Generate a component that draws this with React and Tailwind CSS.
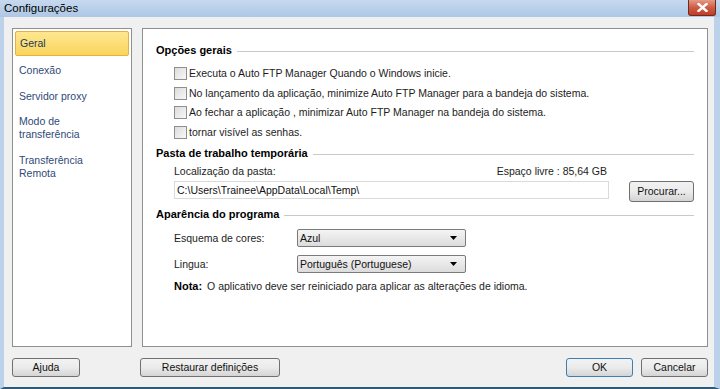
import React, { useState } from 'react';

const navItems = [
  { id: 'geral', label: ['Geral'] },
  { id: 'conexao', label: ['Conexão'] },
  { id: 'proxy', label: ['Servidor proxy'] },
  { id: 'modo', label: ['Modo de', 'transferência'] },
  { id: 'remota', label: ['Transferência', 'Remota'] },
];

const options = [
  'Executa o Auto FTP Manager Quando o Windows inicie.',
  'No lançamento da aplicação, minimize Auto FTP Manager para a bandeja do sistema.',
  'Ao fechar a aplicação , minimizar Auto FTP Manager na bandeja do sistema.',
  'tornar visível as senhas.',
];

function SectionHeading({ children }) {
  return (
    <div className="flex items-center h-[14px]">
      <span className="font-bold text-[11px] text-black">{children}</span>
      <div className="flex-1 h-px bg-[#c9c9c9] ml-[5px] mt-[2px]" />
    </div>
  );
}

function Checkbox({ checked, onChange }) {
  return (
    <button
      onClick={onChange}
      className="w-[13px] h-[13px] border border-[#8f8f8f] bg-gradient-to-br from-[#dcdcdc] to-[#f8f8f8] flex items-center justify-center p-0"
    >
      {checked && (
        <svg width="9" height="9" viewBox="0 0 9 9">
          <path d="M1 4.5 L3.5 7 L8 1.5" stroke="#333" strokeWidth="1.6" fill="none" />
        </svg>
      )}
    </button>
  );
}

function Dropdown({ value }) {
  return (
    <div className="w-[169px] h-[18px] border border-[#7a7a7a] rounded-[2px] bg-gradient-to-b from-[#f4f4f4] to-[#dcdcdc] flex items-center justify-between pl-[2px] pr-[8px]">
      <span className="text-[#111]">{value}</span>
      <svg width="7" height="4" viewBox="0 0 7 4">
        <path d="M0 0 H7 L3.5 4 Z" fill="#000" />
      </svg>
    </div>
  );
}

function Button({ children, className = '', primary }) {
  return (
    <button
      className={`h-[19px] rounded-[3px] border ${primary ? 'border-[#3c7fb1]' : 'border-[#707070]'} bg-gradient-to-b from-[#f2f2f2] via-[#ebebeb] to-[#d4d4d4] text-[#111] text-[10.5px] leading-none flex items-center justify-center ${className}`}
    >
      {children}
    </button>
  );
}

export default function App() {
  const [selected, setSelected] = useState('geral');
  const [checks, setChecks] = useState([false, false, false, false]);

  return (
    <div className="w-[720px] h-[389px] overflow-hidden flex flex-col bg-[#f0f0f0] text-[10.5px] leading-[13px] font-['Liberation_Sans',Arial,sans-serif]">
      {/* title bar */}
      <div className="h-[17px] flex items-start justify-between bg-gradient-to-b from-[#c6d9ef] to-[#adc7e5] pl-[4px] pr-[4px]">
        <span className="text-[11.5px] leading-[17px] text-black">Configurações</span>
        <div className="w-[28px] h-[16px] rounded-b-[3px] border border-t-0 border-[#6f2a20] bg-gradient-to-b from-[#e49a86] via-[#cf5b43] to-[#c03d25] flex items-center justify-center">
          <svg width="11" height="9" viewBox="0 0 11 9">
            <path d="M1.5 1 L9.5 8 M9.5 1 L1.5 8" stroke="#fff" strokeWidth="2.4" strokeLinecap="square" />
          </svg>
        </div>
      </div>

      {/* window body */}
      <div className="flex-1 flex flex-col border-l-[4px] border-r-[6px] border-b-[2px] border-l-[#bcd2ea] border-r-[#bcd2ea] border-b-[#2d5a78] pt-[11px] pl-[8px] pr-[6px]">
        <div className="flex h-[319px]">
          {/* nav */}
          <div className="w-[120px] h-full border border-[#8e8f8f] bg-white p-[2px] flex flex-col">
            {navItems.map((item) => {
              const active = item.id === selected;
              return (
                <div
                  key={item.id}
                  onClick={() => setSelected(item.id)}
                  className={`pl-[4px] cursor-pointer ${
                    active
                      ? 'h-[25px] flex items-center border border-[#e3b146] rounded-[2px] bg-gradient-to-b from-[#fde78f] to-[#fbd55b] text-[#1e3a5c] mb-[8px]'
                      : 'text-[#2f4a78] mb-[12.5px]'
                  }`}
                >
                  <div className="flex flex-col">
                    {item.label.map((l) => (
                      <span key={l}>{l}</span>
                    ))}
                  </div>
                </div>
              );
            })}
          </div>

          {/* content panel */}
          <div className="w-[566px] ml-[10px] h-full border border-[#8e8f8f] bg-white pt-[14px] pl-[13px] pr-[13px] text-[#1c1c1c]">
            <SectionHeading>Opções gerais</SectionHeading>
            <div className="mt-[7px] pl-[18px] flex flex-col">
              {options.map((opt, i) => (
                <div key={i} className="h-[19.5px] flex items-center gap-[2px]">
                  <Checkbox
                    checked={checks[i]}
                    onChange={() => setChecks(checks.map((c, j) => (j === i ? !c : c)))}
                  />
                  <span>{opt}</span>
                </div>
              ))}
            </div>

            <div className="mt-[4px]">
              <SectionHeading>Pasta de trabalho temporária</SectionHeading>
            </div>
            <div className="pl-[18px]">
              <div className="mt-[5px] h-[14px] flex justify-between w-[433px]">
                <span>Localização da pasta:</span>
                <span>Espaço livre : 85,64 GB</span>
              </div>
              <div className="mt-[2px] flex items-start">
                <div className="w-[435px] h-[18px] border border-[#dadada] flex items-center pl-[2px] text-[#111]">
                  C:\Users\Trainee\AppData\Local\Temp\
                </div>
                <Button className="ml-[20px] w-[65px] h-[21px]">Procurar...</Button>
              </div>
            </div>

            <div className="mt-[5px]">
              <SectionHeading>Aparência do programa</SectionHeading>
            </div>
            <div className="pl-[18px]">
              <div className="mt-[8px] flex items-center">
                <span className="w-[123px]">Esquema de cores:</span>
                <Dropdown value="Azul" />
              </div>
              <div className="mt-[8px] flex items-center">
                <span className="w-[123px]">Lingua:</span>
                <Dropdown value="Português (Portuguese)" />
              </div>
              <div className="mt-[7px] flex items-center">
                <span className="font-bold text-[11px] text-black">Nota:</span>
                <span className="ml-[5px]">O aplicativo deve ser reiniciado para aplicar as alterações de idioma.</span>
              </div>
            </div>
          </div>
        </div>

        {/* bottom buttons */}
        <div className="mt-[11px] flex items-center">
          <Button className="w-[68px]">Ajuda</Button>
          <Button className="w-[140px] ml-[60px]">Restaurar definições</Button>
          <div className="flex-1" />
          <Button primary className="w-[67px]">OK</Button>
          <Button className="w-[67px] ml-[8px]">Cancelar</Button>
        </div>
      </div>
    </div>
  );
}
